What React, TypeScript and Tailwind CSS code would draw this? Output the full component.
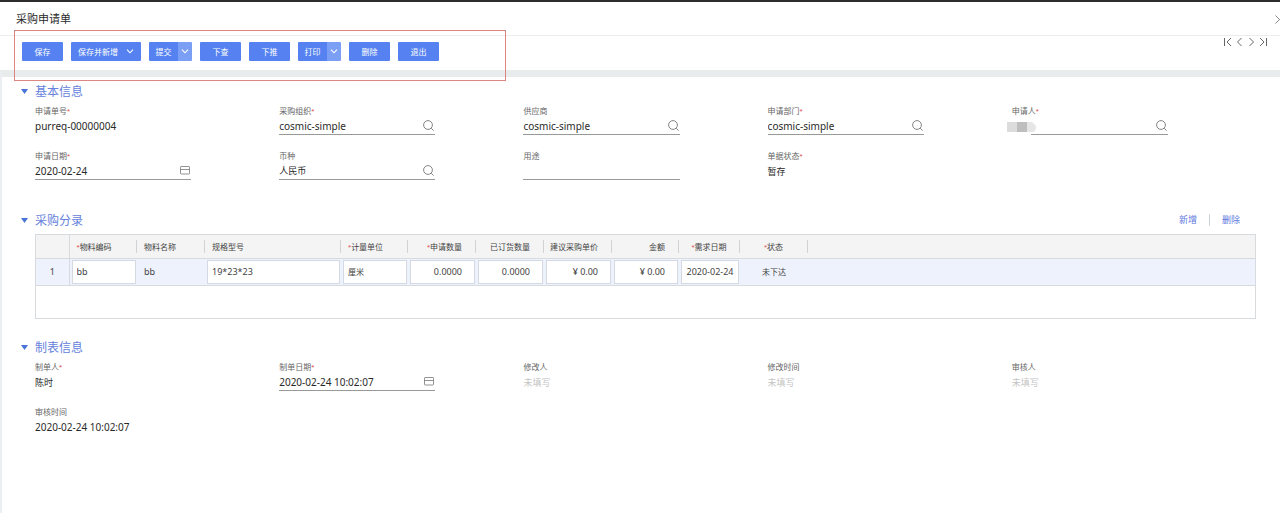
import React from 'react';
import clsx from 'clsx';

type FieldKind = 'text' | 'input' | 'search' | 'date' | 'empty';

interface FieldData {
  id: string;
  label: string;
  value?: string;
  required?: boolean;
  kind: FieldKind;
  masked?: boolean;
}

const basicFields: FieldData[] = [
  { id: 'billno', label: '申请单号', value: 'purreq-00000004', required: true, kind: 'text' },
  { id: 'org', label: '采购组织', value: 'cosmic-simple', required: true, kind: 'search' },
  { id: 'supplier', label: '供应商', value: 'cosmic-simple', kind: 'search' },
  { id: 'dept', label: '申请部门', value: 'cosmic-simple', required: true, kind: 'search' },
  { id: 'applicant', label: '申请人', value: '', required: true, kind: 'search', masked: true },
  { id: 'applydate', label: '申请日期', value: '2020-02-24', required: true, kind: 'date' },
  { id: 'currency', label: '币种', value: '人民币', kind: 'search' },
  { id: 'usage', label: '用途', value: '', kind: 'input' },
  { id: 'status', label: '单据状态', value: '暂存', required: true, kind: 'text' },
];

const auditFields: FieldData[] = [
  { id: 'creator', label: '制单人', value: '陈时', required: true, kind: 'text' },
  { id: 'createtime', label: '制单日期', value: '2020-02-24 10:02:07', required: true, kind: 'date' },
  { id: 'modifier', label: '修改人', kind: 'empty' },
  { id: 'modifytime', label: '修改时间', kind: 'empty' },
  { id: 'auditor', label: '审核人', kind: 'empty' },
  { id: 'audittime', label: '审核时间', value: '2020-02-24 10:02:07', kind: 'text' },
];

interface Column {
  title: string;
  value: string;
  width: string;
  align: string;
  required?: boolean;
  editable?: boolean;
}

const columns: Column[] = [
  { title: '物料编码', value: 'bb', width: 'w-[68px]', align: 'text-left', required: true, editable: true },
  { title: '物料名称', value: 'bb', width: 'w-[68px]', align: 'text-left' },
  { title: '规格型号', value: '19*23*23', width: 'w-[136px]', align: 'text-left', editable: true },
  { title: '计量单位', value: '厘米', width: 'w-[67px]', align: 'text-left', required: true, editable: true },
  { title: '申请数量', value: '0.0000', width: 'w-[68px]', align: 'text-right', required: true, editable: true },
  { title: '已订货数量', value: '0.0000', width: 'w-[68px]', align: 'text-right', editable: true },
  { title: '建议采购单价', value: '¥ 0.00', width: 'w-[68px]', align: 'text-right', editable: true },
  { title: '金额', value: '¥ 0.00', width: 'w-[67px]', align: 'text-right', editable: true },
  { title: '需求日期', value: '2020-02-24', width: 'w-[61px]', align: 'text-center', required: true, editable: true },
  { title: '状态', value: '未下达', width: 'w-[68px]', align: 'text-center', required: true },
];

const hasChinese = (s = '') => /[\u4e00-\u9fa5]/.test(s);

const SearchIcon = () => (
  <svg width="11" height="11" viewBox="0 0 11 11" fill="none" stroke="#666" strokeWidth="0.8">
    <circle cx="5" cy="5" r="4.4" />
    <path d="M8.2 8.2 L10.6 10.6" />
  </svg>
);

const CalendarIcon = () => (
  <svg width="10" height="11" viewBox="0 0 10 11" fill="none" stroke="#777" strokeWidth="0.8">
    <rect x="0.5" y="1.5" width="9" height="7.5" rx="0.6" />
    <path d="M0.5 4.5 H9.5" />
  </svg>
);

const ChevronDown = () => (
  <svg width="8" height="5" viewBox="0 0 8 5" fill="none" stroke="#fff" strokeWidth="1.1">
    <path d="M1 0.7 L4 3.8 L7 0.7" />
  </svg>
);

const Star = () => <span className="font-['Liberation_Sans',sans-serif] text-[#e0504f]">*</span>;

const ToolButton = ({ text }: { text: string }) => (
  <button type="button" className="h-[19px] w-[41px] rounded-[1px] bg-[#5582f0] text-[8px] text-white">
    {text}
  </button>
);

const SplitButton = ({ text }: { text: string }) => (
  <div className="flex h-[19px] w-[43px] overflow-hidden rounded-[1px]">
    <button type="button" className="flex-1 bg-[#5582f0] text-[8px] text-white">{text}</button>
    <button type="button" aria-label={`${text}选项`} className="flex w-[14px] items-center justify-center bg-[#7b9ff4]">
      <ChevronDown />
    </button>
  </div>
);

const NavButton = ({ label, d }: { label: string; d: string }) => (
  <button type="button" aria-label={label}>
    <svg width="9" height="10" viewBox="0 0 9 10" fill="none" stroke="#666" strokeWidth="1">
      <path d={d} />
    </svg>
  </button>
);

const Field = ({ field }: { field: FieldData }) => {
  const { id, label, value, required, kind, masked } = field;
  const size = hasChinese(value) ? 'text-[9px]' : 'text-[10px]';

  if (kind === 'text' || kind === 'empty') {
    const text = kind === 'empty' ? '未填写' : value;
    return (
      <div>
        <div className="h-3 text-[8px] leading-3 text-[#666]">{label}{required && <Star />}</div>
        <div
          className={clsx(
            'h-[18px]',
            hasChinese(text) ? 'text-[9px] leading-5' : 'text-[10px] leading-[18px]',
            kind === 'empty' && 'text-[#c4c4c4]'
          )}
        >
          {text}
        </div>
      </div>
    );
  }

  return (
    <div className="relative w-[64%]">
      <label htmlFor={id} className="block h-3 text-[8px] leading-3 text-[#666]">{label}{required && <Star />}</label>
      <div className="flex h-[18px] items-center border-b border-[#999] pr-px">
        <input id={id} defaultValue={value} className={clsx('h-full min-w-0 flex-1 bg-transparent outline-none', size)} />
        {kind === 'search' && <button type="button" aria-label={`查找${label}`}><SearchIcon /></button>}
        {kind === 'date' && <button type="button" aria-label={`选择${label}`}><CalendarIcon /></button>}
      </div>
      {/* Hidden name */}
      {masked && (
        <div className="absolute -left-[5px] bottom-0 h-[18px] w-6 bg-white">
          <svg width="30" height="18" viewBox="0 0 30 18" className="max-w-none">
            <rect x="0" y="5" width="10" height="10" fill="#dcdcdc" />
            <rect x="10" y="5" width="10" height="10" fill="#bebebe" />
            <path d="M20 5 h5 l4 4 v3 l-2 3 h-7 z" fill="#e6e6e6" />
          </svg>
        </div>
      )}
    </div>
  );
};

const SectionTitle = ({ title, children }: { title: string; children?: React.ReactNode }) => (
  <div className="mb-1 flex h-5 items-center justify-between">
    <button type="button" className="-ml-[14px] flex items-center gap-[7px] text-[#6682dc]">
      <svg width="7" height="5" viewBox="0 0 7 5"><path d="M0 0 H7 L3.5 5 Z" fill="#4a74d8" /></svg>
      <h2 className="pt-px text-[12px] leading-5">{title}</h2>
    </button>
    {children}
  </div>
);

const EntryTable = () => (
  <div className="h-[85px] border border-[#d8dbdd]">
    <table className="w-full table-fixed border-collapse text-[#444]">
      <thead>
        <tr className="h-[23px] border-b border-[#d8dbdd] bg-[#f4f4f4] text-[8px]">
          <th className="w-[33px] border-r border-[#d8dbdd] p-0" />
          {columns.map((col) => (
            <th key={col.title} className={clsx('p-0 font-normal', col.width)}>
              <div
                className={clsx(
                  'h-[13px] border-r border-[#d0d3d5] leading-[13px] whitespace-nowrap',
                  col.align,
                  col.align === 'text-left' && 'pl-[7px]',
                  col.align === 'text-right' && 'pr-[13px]'
                )}
              >
                {col.required && <Star />}{col.title}
              </div>
            </th>
          ))}
          <th className="p-0" />
        </tr>
      </thead>
      <tbody>
        <tr className="h-[27px] border-b border-[#d8dbdd] bg-[#eef2fd]">
          <td className="border-r border-[#d8dbdd] p-0 text-center text-[9px]">1</td>
          {columns.map((col) => {
            const size = hasChinese(col.value) ? 'text-[8px]' : 'text-[9px]';
            return (
              <td key={col.title} className={clsx('p-0', size, col.align)}>
                {col.editable ? (
                  <div className="flex pr-px pl-[2px]">
                    <input
                      aria-label={col.title}
                      defaultValue={col.value}
                      className={clsx(
                        'h-6 w-full min-w-0 border border-[#d5d9e2] bg-white outline-none',
                        col.align,
                        col.align === 'text-left' && 'px-1',
                        col.align === 'text-right' && 'pr-3'
                      )}
                    />
                  </div>
                ) : (
                  <span className={clsx(col.align === 'text-left' && 'pl-[7px]')}>{col.value}</span>
                )}
              </td>
            );
          })}
          <td className="p-0" />
        </tr>
      </tbody>
    </table>
  </div>
);

export default function App() {
  return (
    <div
      lang="zh-CN"
      className="relative flex min-h-screen flex-col overflow-hidden border-t-2 border-[#2d2b2e] bg-white font-['Noto_Sans','Noto_Sans_CJK_SC',sans-serif] text-[#2a2a2a]"
    >
      {/* Title */}
      <header className="flex h-[34px] items-center justify-between border-b border-[#ececec] pt-px pl-4">
        <h1 className="text-[11px] leading-4">采购申请单</h1>
        <button type="button" aria-label="关闭" className="-mr-1">
          <svg width="9" height="9" viewBox="0 0 9 9" fill="none" stroke="#888" strokeWidth="1">
            <path d="M0.5 0.5 L8.5 8.5 M8.5 0.5 L0.5 8.5" />
          </svg>
        </button>
      </header>

      {/* Toolbar */}
      <div className="flex h-[34px] items-start justify-between pl-[22px] pr-3">
        <div className="flex gap-2 pt-[6px]">
          <ToolButton text="保存" />
          <button type="button" className="flex h-[19px] w-[70px] items-center justify-between rounded-[1px] bg-[#5582f0] px-[7px] text-[8px] text-white">
            保存并新增 <ChevronDown />
          </button>
          <SplitButton text="提交" />
          <ToolButton text="下查" />
          <ToolButton text="下推" />
          <SplitButton text="打印" />
          <ToolButton text="删除" />
          <ToolButton text="退出" />
        </div>
        <div className="flex gap-[3px] pt-px">
          <NavButton label="第一条" d="M1.5 1 V9 M8 1 L4 5 L8 9" />
          <NavButton label="上一条" d="M6.5 1 L2.5 5 L6.5 9" />
          <NavButton label="下一条" d="M2.5 1 L6.5 5 L2.5 9" />
          <NavButton label="最后一条" d="M1 1 L5 5 L1 9 M7.5 1 V9" />
        </div>
      </div>

      {/* Red marker round the toolbar */}
      <div className="pointer-events-none absolute left-[14px] top-7 h-[51px] w-[492px] border border-[#dd8582]" />

      {/* Form body */}
      <main className="flex-1 border-t-[7px] border-l-2 border-t-[#e9eced] border-l-[#eceff1] pt-1 pr-6 pl-[33px]">
        <section>
          <SectionTitle title="基本信息" />
          <div className="grid grid-cols-5 gap-y-[15px]">
            {basicFields.map((field) => <Field key={field.id} field={field} />)}
          </div>
        </section>

        <section className="mt-[30px]">
          <SectionTitle title="采购分录">
            <div className="flex items-center pr-4 text-[9px] leading-3 text-[#5b78e0]">
              <button type="button" className="border-r border-[#ccd0dc] pr-3">新增</button>
              <button type="button" className="pl-3">删除</button>
            </div>
          </SectionTitle>
          <EntryTable />
        </section>

        <section className="mt-[18px]">
          <SectionTitle title="制表信息" />
          <div className="grid grid-cols-5 gap-y-[15px]">
            {auditFields.map((field) => <Field key={field.id} field={field} />)}
          </div>
        </section>
      </main>
    </div>
  );
}
